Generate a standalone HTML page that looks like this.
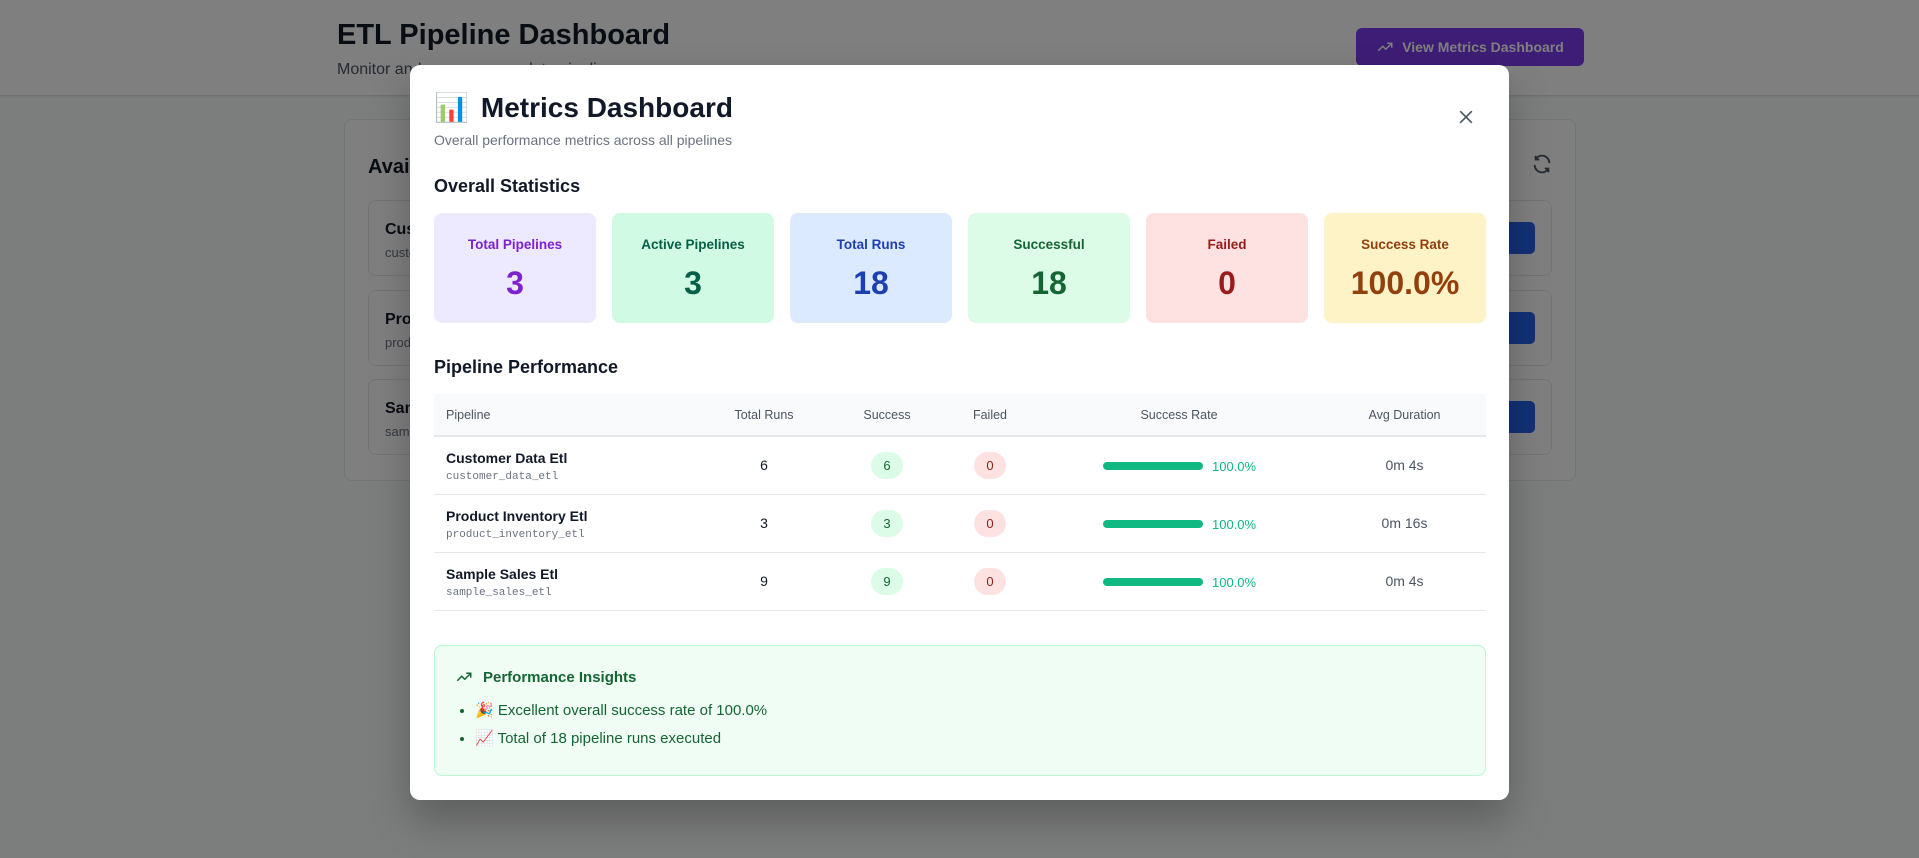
<!DOCTYPE html>
<html><head><meta charset="utf-8"><style>
*{box-sizing:border-box;margin:0;padding:0}
body{width:1919px;height:858px;overflow:hidden;background:#f9fafb;font-family:"Liberation Sans","Noto Sans CJK SC",sans-serif;position:relative;color:#111827}
.hdr{position:absolute;left:0;top:0;width:1919px;height:95px;background:#fff;box-shadow:0 1px 3px rgba(0,0,0,.15)}
.hdr h1{position:absolute;left:337px;top:19px;font-size:29px;font-weight:bold;color:#111827}
.hdr p{position:absolute;left:337px;top:61px;font-size:16px;color:#4b5563}
.vbtn{position:absolute;left:1356px;top:28px;width:228px;height:38px;background:#7c3aed;border-radius:6px;color:#fff;font-size:14px;font-weight:bold;display:flex;align-items:center;justify-content:center;gap:8px}
.bcard{position:absolute;left:344px;top:119px;width:1232px;height:362px;background:#fff;border:1px solid #e5e7eb;border-radius:8px}
.bcard h2{position:absolute;left:23px;top:36px;font-size:20px;font-weight:600}
.brow{position:absolute;left:23px;width:1184px;height:76px;border:1px solid #e5e7eb;border-radius:8px}
.brow b{position:absolute;left:16px;top:20px;font-size:16px}
.brow span{position:absolute;left:16px;top:44px;font-size:13px;color:#6b7280}
.brow i{position:absolute;right:16px;top:21px;width:80px;height:32px;background:#2563eb;border-radius:5px}
.ov{position:absolute;left:0;top:0;width:1919px;height:858px;background:rgba(0,0,0,.5)}
.modal{position:absolute;left:410px;top:65px;width:1099px;height:735px;background:#fff;border-radius:10px;box-shadow:0 20px 40px rgba(0,0,0,.25)}
.mt{position:absolute;left:24px;top:26px;font-size:28px;font-weight:bold;display:flex;align-items:center;gap:12px}
.ms{position:absolute;left:24px;top:67px;font-size:14px;color:#6b7280}
.close{position:absolute;left:1046px;top:42px}
.sec{position:absolute;left:24px;font-size:18px;font-weight:600;color:#111827}
.cards{position:absolute;left:24px;top:148px;display:flex;gap:16px}
.c{width:162px;height:110px;border-radius:8px;text-align:center}
.c .l{font-size:13.5px;font-weight:600;margin-top:24px}
.c .n{font-size:32px;font-weight:bold;margin-top:13px}
table{position:absolute;left:24px;top:329px;width:1052px;border-collapse:collapse;table-layout:fixed}
th{background:#f9fafb;font-size:12.5px;font-weight:normal;color:#4b5563;height:42px;border-bottom:2px solid #e5e7eb;text-align:center}
td{height:58px;border-bottom:1px solid #e5e7eb;text-align:center;font-size:14px}
.nm{text-align:left;padding-left:12px;padding-top:2px}
.nm b{display:block;font-size:14px;font-weight:600;color:#111827}
.nm code{font-family:"Liberation Mono",monospace;font-size:11px;color:#6b7280}
.pill{display:inline-block;min-width:32px;height:27px;line-height:27px;border-radius:14px;font-size:13px}
.g{background:#dcfce7;color:#166534}.r{background:#fee2e2;color:#991b1b}
.bar{display:inline-block;width:100px;height:8px;border-radius:4px;background:#10b981;vertical-align:middle;margin-right:9px}
.pct{color:#10b981;font-size:13px;vertical-align:middle}
.sr{text-align:left;padding-left:68px}
.ins{position:absolute;left:24px;top:580px;width:1052px;height:131px;background:#f0fdf4;border:1px solid #bbf7d0;border-radius:8px;color:#166534}
.ins h3{position:absolute;left:20px;top:22px;font-size:15px;font-weight:600;display:flex;gap:10px;align-items:center}
.ins ul{position:absolute;left:40px;top:51px;font-size:15px;line-height:28px}
</style></head><body>
<div class="hdr"><h1>ETL Pipeline Dashboard</h1><p>Monitor and manage your data pipelines</p>
<div class="vbtn"><svg width="18" height="18" viewBox="0 0 24 24" fill="none" stroke="#fff" stroke-width="2"><path d="M3 17l6-6 4 4 8-8M15 7h6v6"/></svg>View Metrics Dashboard</div></div>
<div class="bcard"><h2>Available Pipelines</h2>
<svg style="position:absolute;right:22px;top:33px" width="22" height="22" viewBox="0 0 24 24" fill="none" stroke="#4b5563" stroke-width="2"><path d="M20 11A8 8 0 0 0 5 7M4 13a8 8 0 0 0 15 4M5 3v4h4M19 21v-4h-4"/></svg>
<div class="brow" style="top:80px"><b>Customer Data Etl</b><span>customer_data_etl</span><i></i></div>
<div class="brow" style="top:170px"><b>Product Inventory Etl</b><span>product_inventory_etl</span><i></i></div>
<div class="brow" style="top:259px"><b>Sample Sales Etl</b><span>sample_sales_etl</span><i></i></div>
</div>
<div class="ov"></div>
<div class="modal">
<div class="mt"><span style="font-size:28px">📊</span>Metrics Dashboard</div>
<div class="ms">Overall performance metrics across all pipelines</div>
<svg class="close" width="20" height="20" viewBox="0 0 24 24" fill="none" stroke="#4b5563" stroke-width="2"><path d="M5 5l14 14M19 5L5 19"/></svg>
<div class="sec" style="top:111px">Overall Statistics</div>
<div class="cards">
<div class="c" style="background:#ede9fe;color:#7e22ce"><div class="l">Total Pipelines</div><div class="n">3</div></div>
<div class="c" style="background:#d1fae5;color:#065f46"><div class="l">Active Pipelines</div><div class="n">3</div></div>
<div class="c" style="background:#dbeafe;color:#1e40af"><div class="l">Total Runs</div><div class="n">18</div></div>
<div class="c" style="background:#dcfce7;color:#166534"><div class="l">Successful</div><div class="n">18</div></div>
<div class="c" style="background:#fee2e2;color:#991b1b"><div class="l">Failed</div><div class="n">0</div></div>
<div class="c" style="background:#fef3c7;color:#92400e"><div class="l">Success Rate</div><div class="n">100.0%</div></div>
</div>
<div class="sec" style="top:292px">Pipeline Performance</div>
<table>
<colgroup><col style="width:265px"><col style="width:130px"><col style="width:116px"><col style="width:90px"><col style="width:288px"><col style="width:163px"></colgroup>
<tr><th style="text-align:left;padding-left:12px">Pipeline</th><th>Total Runs</th><th>Success</th><th>Failed</th><th>Success Rate</th><th>Avg Duration</th></tr>
<tr><td class="nm"><b>Customer Data Etl</b><code>customer_data_etl</code></td><td>6</td><td><span class="pill g">6</span></td><td><span class="pill r">0</span></td><td class="sr"><span class="bar"></span><span class="pct">100.0%</span></td><td style="color:#4b5563">0m 4s</td></tr>
<tr><td class="nm"><b>Product Inventory Etl</b><code>product_inventory_etl</code></td><td>3</td><td><span class="pill g">3</span></td><td><span class="pill r">0</span></td><td class="sr"><span class="bar"></span><span class="pct">100.0%</span></td><td style="color:#4b5563">0m 16s</td></tr>
<tr><td class="nm"><b>Sample Sales Etl</b><code>sample_sales_etl</code></td><td>9</td><td><span class="pill g">9</span></td><td><span class="pill r">0</span></td><td class="sr"><span class="bar"></span><span class="pct">100.0%</span></td><td style="color:#4b5563">0m 4s</td></tr>
</table>
<div class="ins"><h3><svg width="18" height="18" viewBox="0 0 24 24" fill="none" stroke="#166534" stroke-width="2"><path d="M3 17l6-6 4 4 8-8M15 7h6v6"/></svg>Performance Insights</h3>
<ul><li>🎉 Excellent overall success rate of 100.0%</li><li>📈 Total of 18 pipeline runs executed</li></ul></div>
</div>
</body></html>
